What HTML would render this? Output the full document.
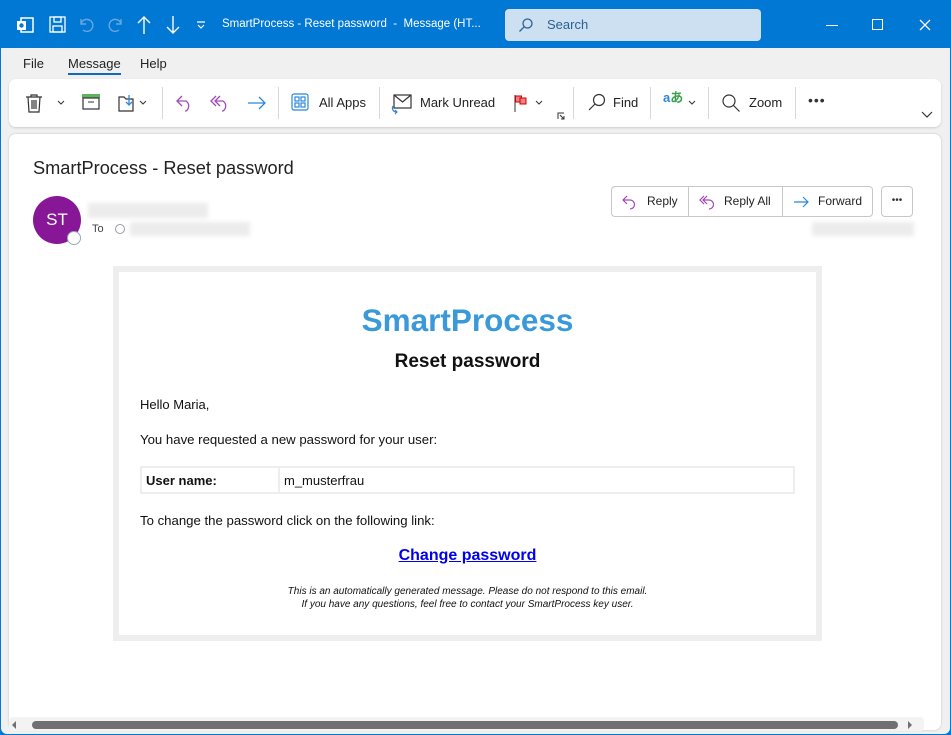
<!DOCTYPE html>
<html><head><style>
*{box-sizing:border-box;margin:0;padding:0}
body{width:951px;height:735px;overflow:hidden;background:#0078d4;font-family:"Segoe UI","Liberation Sans",sans-serif;position:relative}
.abs{position:absolute}
.win{position:absolute;left:1px;top:48px;width:949px;height:686px;background:#f0f0f0;border-radius:0 0 6px 6px}
.t{color:#fff;font-size:11.5px}
.tab{font-size:13px;color:#222;top:56px}
.rib{left:9px;top:79px;width:932px;height:48px;background:#fff;border-radius:7px;box-shadow:0 1px 2px rgba(0,0,0,.15)}
.rl{font-size:13px;color:#222;top:95px}
.sep{width:1px;height:32px;background:#d8d8d8;top:87px}
.pane{left:9px;top:134px;width:932px;height:596px;background:#fff;border-radius:7px;box-shadow:0 0 2px rgba(0,0,0,.2)}
.btn{font-size:12px;color:#222}
.ar{font-family:"Liberation Sans",Arial,sans-serif}
</style></head><body>
<svg class="abs" style="left:15px;top:15px" width="20" height="20" viewBox="0 0 20 20"><rect x="6" y="3" width="12" height="14" fill="none" stroke="#fff" stroke-width="1.5"/><rect x="2" y="6" width="9" height="9" fill="#fff"/><circle cx="6.5" cy="10.5" r="2.2" fill="#0078d4"/></svg>
<svg class="abs" style="left:48px;top:15px" width="20" height="20" viewBox="0 0 20 20" fill="none" stroke="#fff" stroke-width="1.3"><rect x="2" y="2" width="15" height="15"/><rect x="6" y="2" width="7" height="5"/><rect x="5" y="11" width="9" height="6"/></svg>
<svg class="abs" style="left:78px;top:15px" width="20" height="20" viewBox="0 0 20 20" fill="none" stroke="#6aa6e0" stroke-width="1.4"><path d="M3 4v5h5M3 9a6 6 0 1 1 2 6"/></svg>
<svg class="abs" style="left:106px;top:15px" width="20" height="20" viewBox="0 0 20 20" fill="none" stroke="#6aa6e0" stroke-width="1.4"><path d="M15 4v5h-5M15 9a6 6 0 1 0-2 6"/></svg>
<svg class="abs" style="left:135px;top:14px" width="18" height="22" viewBox="0 0 18 22" fill="none" stroke="#fff" stroke-width="1.4"><path d="M9 20V3M3 9l6-6 6 6"/></svg>
<svg class="abs" style="left:164px;top:14px" width="18" height="22" viewBox="0 0 18 22" fill="none" stroke="#fff" stroke-width="1.4"><path d="M9 2v17M3 13l6 6 6-6"/></svg>
<svg class="abs" style="left:196px;top:20px" width="10" height="10" viewBox="0 0 10 10" fill="none" stroke="#fff" stroke-width="1.2"><path d="M1 2h8M2 5l3 3 3-3"/></svg>
<div class="abs t" style="left:222px;top:18px">SmartProcess - Reset password &nbsp;- &nbsp;Message (HT...</div>
<div class="abs" style="left:505px;top:9px;width:256px;height:32px;background:#cce0f2;border-radius:4px"></div>
<svg class="abs" style="left:518px;top:17px" width="16" height="16" viewBox="0 0 16 16" fill="none" stroke="#2c5f8f" stroke-width="1.3"><circle cx="9.5" cy="6.5" r="4.5"/><path d="M6.3 9.7L1.5 14.5"/></svg>
<div class="abs" style="left:547px;top:17px;font-size:13px;color:#2c5f8f">Search</div>
<div class="abs" style="left:826px;top:25px;width:12px;height:1px;background:#fff"></div>
<div class="abs" style="left:872px;top:19px;width:11px;height:11px;border:1.3px solid #fff"></div>
<svg class="abs" style="left:919px;top:19px" width="12" height="12" viewBox="0 0 12 12" stroke="#fff" stroke-width="1.3"><path d="M1 1l10 10M11 1L1 11"/></svg>

<div class="win"></div>
<div class="abs tab" style="left:23px">File</div>
<div class="abs tab" style="left:68px">Message</div>
<div class="abs" style="left:68px;top:73px;width:53px;height:2px;background:#0f6cbd"></div>
<div class="abs tab" style="left:140px">Help</div>

<div class="abs rib"></div>
<svg class="abs" style="left:25px;top:93px" width="18" height="20" viewBox="0 0 18 20" fill="none" stroke="#333" stroke-width="1.2"><path d="M1 4h16M6 4V2h6v2M3 4l1 15h10l1-15M7 7v9M9 7v9M11 7v9"/></svg>
<svg class="abs" style="left:57px;top:100px" width="8" height="6"><path d="M1 1l3 3 3-3" stroke="#333" fill="none"/></svg>
<svg class="abs" style="left:81px;top:93px" width="20" height="18" viewBox="0 0 20 18"><rect x="1" y="1" width="18" height="4" fill="#5eb35e"/><rect x="2" y="5" width="16" height="11" fill="none" stroke="#333" stroke-width="1.2"/><path d="M7 9h6" stroke="#333"/></svg>
<svg class="abs" style="left:117px;top:93px" width="20" height="20" viewBox="0 0 20 20" fill="none"><path d="M2 4h5l2 2h7v12H2z" stroke="#333" stroke-width="1.2"/><path d="M12 2v10M9 9l3 3 3-3" stroke="#2b88d8" stroke-width="1.3"/></svg>
<svg class="abs" style="left:139px;top:100px" width="8" height="6"><path d="M1 1l3 3 3-3" stroke="#333" fill="none"/></svg>
<div class="abs sep" style="left:162px"></div>
<svg class="abs" style="left:175px;top:93px" width="20" height="20" viewBox="0 0 20 20" fill="none" stroke="#a24ab8" stroke-width="1.3"><path d="M7 3L2 8l5 5M2 8h9a6 6 0 0 1 0 10h-1"/></svg>
<svg class="abs" style="left:210px;top:93px" width="22" height="20" viewBox="0 0 22 20" fill="none" stroke="#a24ab8" stroke-width="1.3"><path d="M6 3L1 8l5 5M10 3L5 8l5 5M5 8h8a6 6 0 0 1 0 10h-1"/></svg>
<svg class="abs" style="left:247px;top:94px" width="20" height="18" viewBox="0 0 20 18" fill="none" stroke="#2b88d8" stroke-width="1.3"><path d="M1 9h17M12 3l6 6-6 6"/></svg>
<div class="abs sep" style="left:278px"></div>
<svg class="abs" style="left:291px;top:93px" width="18" height="18" viewBox="0 0 18 18" fill="none" stroke="#2b88d8" stroke-width="1.2"><rect x="1" y="1" width="16" height="16" rx="2"/><rect x="4" y="4" width="4" height="4"/><rect x="10" y="4" width="4" height="4"/><rect x="4" y="10" width="4" height="4"/><rect x="10" y="10" width="4" height="4"/></svg>
<div class="abs rl" style="left:319px">All Apps</div>
<div class="abs sep" style="left:379px"></div>
<svg class="abs" style="left:391px;top:93px" width="22" height="22" viewBox="0 0 22 22" fill="none"><rect x="3" y="2" width="17" height="13" stroke="#333" stroke-width="1.2"/><path d="M3 2l8.5 7L20 2" stroke="#333" stroke-width="1.2"/><path d="M2 13a4 4 0 0 0 4 6M4 21l2-2-2-2" stroke="#2b88d8" stroke-width="1.2"/></svg>
<div class="abs rl" style="left:420px">Mark Unread</div>
<svg class="abs" style="left:513px;top:94px" width="16" height="18" viewBox="0 0 16 18"><path d="M2 1v17" stroke="#333"/><rect x="2.5" y="2" width="6" height="6" fill="#f08080" stroke="#c00"/><rect x="7" y="4" width="6" height="6" fill="#f08080" stroke="#c00"/></svg>
<svg class="abs" style="left:535px;top:100px" width="8" height="6"><path d="M1 1l3 3 3-3" stroke="#333" fill="none"/></svg>
<svg class="abs" style="left:557px;top:112px" width="8" height="8" viewBox="0 0 8 8" fill="none" stroke="#333"><path d="M1 7V1h6M3 3l4 4M4 7h3V4"/></svg>
<div class="abs sep" style="left:573px"></div>
<svg class="abs" style="left:587px;top:93px" width="20" height="20" viewBox="0 0 20 20" fill="none" stroke="#333" stroke-width="1.2"><circle cx="12" cy="7" r="5.5"/><path d="M8 11l-6 6"/></svg>
<div class="abs rl" style="left:613px">Find</div>
<div class="abs sep" style="left:650px"></div>
<div class="abs" style="left:663px;top:93px;font-size:13px;font-weight:bold;line-height:10px;color:#2b88d8">a<span style="color:#3aa050">あ</span></div>
<svg class="abs" style="left:688px;top:100px" width="8" height="6"><path d="M1 1l3 3 3-3" stroke="#333" fill="none"/></svg>
<div class="abs sep" style="left:708px"></div>
<svg class="abs" style="left:721px;top:93px" width="20" height="20" viewBox="0 0 20 20" fill="none" stroke="#333" stroke-width="1.2"><circle cx="8" cy="8" r="6"/><path d="M12.5 12.5l6 6"/></svg>
<div class="abs rl" style="left:749px">Zoom</div>
<div class="abs sep" style="left:795px"></div>
<div class="abs" style="left:808px;top:92px;font-size:14px;color:#333;letter-spacing:1px">•••</div>
<svg class="abs" style="left:921px;top:111px" width="12" height="8"><path d="M1 1l5 5 5-5" stroke="#333" fill="none" stroke-width="1.2"/></svg>

<div class="abs pane"></div>
<div class="abs" style="left:33px;top:158px;font-size:18.2px;color:#222">SmartProcess - Reset password</div>
<div class="abs" style="left:33px;top:196px;width:48px;height:48px;border-radius:50%;background:#881798;color:#fff;font-size:17px;text-align:center;line-height:48px">ST</div>
<div class="abs" style="left:67px;top:231px;width:14px;height:14px;border-radius:50%;background:#fff;border:1.5px solid #9ab"></div>
<div class="abs" style="left:88px;top:203px;width:120px;height:15px;background:#ececec;filter:blur(2px)"></div>
<div class="abs" style="left:92px;top:223px;font-size:11px;color:#444">To</div>
<div class="abs" style="left:115px;top:224px;width:10px;height:10px;border-radius:50%;border:1px solid #99a"></div>
<div class="abs" style="left:130px;top:222px;width:120px;height:14px;background:#ececec;filter:blur(2px)"></div>
<div class="abs" style="left:812px;top:222px;width:102px;height:14px;background:#ececec;filter:blur(2px)"></div>
<div class="abs" style="left:611px;top:186px;width:262px;height:31px;border:1px solid #c8c8c8;border-radius:4px"></div>
<div class="abs" style="left:688px;top:187px;width:1px;height:29px;background:#c8c8c8"></div>
<div class="abs" style="left:782px;top:187px;width:1px;height:29px;background:#c8c8c8"></div>
<svg class="abs" style="left:622px;top:194px" width="16" height="16" viewBox="0 0 16 16" fill="none" stroke="#a24ab8" stroke-width="1.2"><path d="M5 2L1 6l4 4M1 6h7a4.5 4.5 0 0 1 0 9"/></svg>
<div class="abs btn" style="left:647px;top:194px">Reply</div>
<svg class="abs" style="left:699px;top:194px" width="18" height="16" viewBox="0 0 18 16" fill="none" stroke="#a24ab8" stroke-width="1.2"><path d="M5 2L1 6l4 4M8 2L4 6l4 4M4 6h6a4.5 4.5 0 0 1 0 9"/></svg>
<div class="abs btn" style="left:724px;top:194px">Reply All</div>
<svg class="abs" style="left:793px;top:195px" width="16" height="14" viewBox="0 0 16 14" fill="none" stroke="#2b88d8" stroke-width="1.2"><path d="M1 7h14M10 2l5 5-5 5"/></svg>
<div class="abs btn" style="left:818px;top:194px">Forward</div>
<div class="abs" style="left:881px;top:186px;width:32px;height:31px;border:1px solid #c8c8c8;border-radius:4px;text-align:center;font-size:10px;line-height:28px;color:#333">•••</div>

<div class="abs" style="left:113px;top:266px;width:709px;height:375px;border:6px solid #eeeeee;background:#fff"></div>
<div class="abs ar" style="left:119px;width:697px;top:302px;text-align:center;font-size:31.5px;font-weight:bold;color:#3a9ad9">SmartProcess</div>
<div class="abs ar" style="left:119px;width:697px;top:351px;text-align:center;font-size:19px;font-weight:bold;color:#111">Reset password</div>
<div class="abs ar" style="left:140px;top:397px;font-size:13px;color:#111">Hello Maria,</div>
<div class="abs ar" style="left:140px;top:432px;font-size:13.2px;color:#111">You have requested a new password for your user:</div>
<div class="abs" style="left:140px;top:466px;width:655px;height:28px;border:2px solid #eee"></div>
<div class="abs" style="left:278px;top:466px;width:2px;height:28px;background:#eee"></div>
<div class="abs ar" style="left:146px;top:473px;font-size:13px;font-weight:bold;color:#111">User name:</div>
<div class="abs ar" style="left:284px;top:473px;font-size:13px;color:#111">m_musterfrau</div>
<div class="abs ar" style="left:140px;top:513px;font-size:13.2px;color:#111">To change the password click on the following link:</div>
<div class="abs ar" style="left:119px;width:697px;top:547px;text-align:center;font-size:16px;font-weight:bold;color:#0000ee;text-decoration:underline">Change password</div>
<div class="abs ar" style="left:119px;width:697px;top:585px;text-align:center;font-size:10px;font-style:italic;color:#111;line-height:13px">This is an automatically generated message. Please do not respond to this email.<br>If you have any questions, feel free to contact your SmartProcess key user.</div>

<div class="abs" style="left:9px;top:717px;width:915px;height:14px;background:#f3f3f3;border-radius:4px"></div>
<div class="abs" style="left:32px;top:721px;width:866px;height:8px;background:#707070;border-radius:4px"></div>
<div class="abs" style="left:12px;top:721px;width:0;height:0;border-top:4px solid transparent;border-bottom:4px solid transparent;border-right:4px solid #707070"></div>
<div class="abs" style="left:908px;top:721px;width:0;height:0;border-top:4px solid transparent;border-bottom:4px solid transparent;border-left:4px solid #707070"></div>
</body></html>
